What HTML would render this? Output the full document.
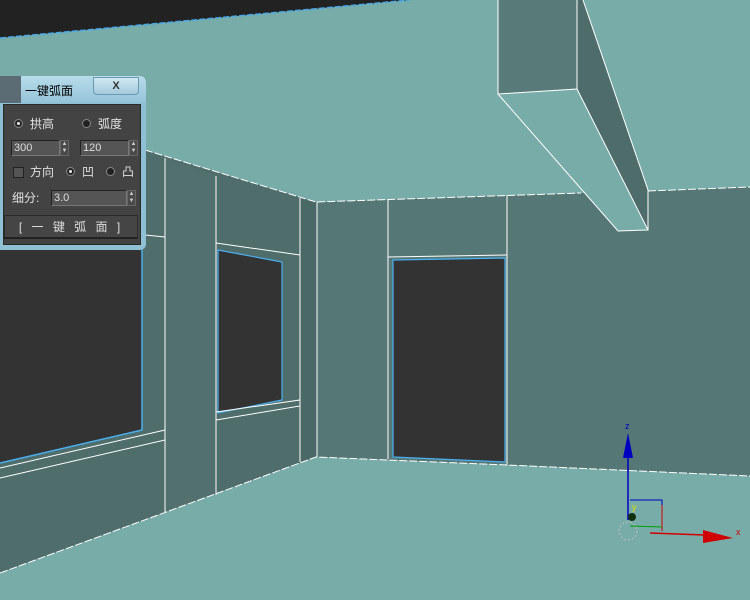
<!DOCTYPE html>
<html><head><meta charset="utf-8"><style>
body{margin:0;width:750px;height:600px;overflow:hidden;background:#78aca9;font-family:"Liberation Sans","Noto Sans CJK SC",sans-serif;position:relative}
svg{position:absolute;left:0;top:0}
.dlg{position:absolute;left:0;top:76px;width:146px;height:174px}
.t{position:absolute;color:#e0e0e0;font-size:12px;line-height:14px}
.inp{position:absolute;background:#555;border:1px solid #222;border-right-color:#777;border-bottom-color:#777;color:#ddd;font-size:11px;line-height:14px;padding-left:2px;box-sizing:border-box;height:16px}
.sp{position:absolute;width:9px;height:16px;background:#4a4a4a;border:1px solid #666;box-sizing:border-box;color:#ccc;font-size:6px;line-height:7px;text-align:center}
.rad{position:absolute;width:9px;height:9px;border-radius:50%;background:#222;border:1px solid #888;box-sizing:border-box}
.rad.on::after{content:"";position:absolute;left:2px;top:2px;width:3px;height:3px;border-radius:50%;background:#eee}
</style></head><body>
<svg width="750" height="600" viewBox="0 0 750 600">
<rect width="750" height="600" fill="#78aca9"/>
<polygon points="0,0 410,0 0,38" fill="#222"/>
<line x1="0" y1="38" x2="410" y2="0" stroke="#4aa8e8" stroke-width="1.5" stroke-dasharray="6,2"/>
<polygon points="145,150 316,202 316,457 0,573 0,250 145,235" fill="#4f6d6b"/>
<polygon points="316,202 581,193 648,191 750,187 750,476 507,465 316,457" fill="#557775"/>
<polygon points="165,158 216,176 216,495 165,512" fill="#52706e"/>
<polygon points="300,198 317,202 317,457 300,462" fill="#4a6866"/>
<polygon points="0,573 316,457 507,465 750,476 750,600 0,600" fill="#78aca9"/>
<polygon points="0,250 142,250 142,430 0,463" fill="#333"/>
<polyline points="0,463 142,430 142,250" fill="none" stroke="#4ab0f0" stroke-width="1.5"/>
<polygon points="218,250 282,262 282,400 218,413" fill="#333"/>
<polygon points="218,250 282,262 282,400 218,413" fill="none" stroke="#4ab0f0" stroke-width="1.2"/>
<polygon points="393,260 505,258 505,462 393,457" fill="#333"/>
<polygon points="393,260 505,258 505,462 393,457" fill="none" stroke="#4ab0f0" stroke-width="1.2"/>
<g stroke="#fff" stroke-width="1" fill="none">
<polyline points="0,468 165,430 165,440 0,478"/>
<polyline points="216,412 300,400 300,406 216,420"/>
<polyline points="216,243 300,255"/>
<polyline points="388,257 507,255"/>
<line x1="165" y1="158" x2="165" y2="512"/>
<line x1="216" y1="176" x2="216" y2="495"/>
<line x1="300" y1="198" x2="300" y2="462"/>
<line x1="317" y1="202" x2="317" y2="457"/>
<line x1="388" y1="200" x2="388" y2="459"/>
<line x1="507" y1="195" x2="507" y2="465"/>
<line x1="145" y1="235" x2="165" y2="237"/>
</g>
<g stroke="#fff" stroke-width="1" fill="none" stroke-dasharray="8,2">
<polyline points="145,150 316,202 581,193"/>
<polyline points="648,191 750,187"/>
<polyline points="0,573 316,457 507,465 750,476"/>
</g>
<polygon points="498,0 577,0 577,89 498,94" fill="#587a78"/>
<polygon points="577,0 583,0 648,190 648,230 577,89" fill="#4e6c6a"/>
<polygon points="498,94 577,89 648,230 618,231" fill="#78aca9"/>
<g stroke="#fff" fill="none" stroke-width="1">
<polyline points="498,0 498,94 577,89 577,0"/>
<polyline points="498,94 618,231 648,230 577,89"/>
<polyline points="583,0 648,190 648,230"/>
</g>
<line x1="628" y1="455" x2="628" y2="520" stroke="#0000c0" stroke-width="1.5"/>
<polygon points="628,433 623,458 633,458" fill="#0000c0"/>
<text x="625" y="429" font-size="9" fill="#0000c0" font-family="Liberation Sans">z</text>
<polyline points="630,500 662,500 662,530" fill="none" stroke="#0000c0"/>
<polyline points="662,505 662,531" stroke="#d00000" fill="none"/>
<polyline points="630,526 662,527" stroke="#00a000" fill="none"/>
<line x1="650" y1="533" x2="705" y2="535" stroke="#d00000" stroke-width="1.5"/>
<polygon points="703,530 733,538 703,543" fill="#d00000"/>
<text x="736" y="535" font-size="9" fill="#d00000" font-family="Liberation Sans">x</text>
<text x="632" y="510" font-size="9" fill="#e0e000" font-family="Liberation Sans">y</text>
<circle cx="632" cy="517" r="4" fill="#103010"/>
<circle cx="628" cy="531" r="9" fill="none" stroke="#bbb" stroke-dasharray="2,2"/>
</svg>
<div class="dlg">
 <div style="position:absolute;left:0;top:0;width:146px;height:27px;background:linear-gradient(#b8dcea,#94c4d8);border-radius:0 6px 0 0"></div>
 <div style="position:absolute;left:0;top:0;width:21px;height:27px;background:#5c6c74"></div>
 <div style="position:absolute;left:25px;top:6px;font-size:12px;color:#000">一键弧面</div>
 <div style="position:absolute;left:93px;top:1px;width:46px;height:18px;border:1px solid #6a9ab0;border-radius:0 0 4px 4px;background:linear-gradient(#cfe8f2,#a4cadc);box-sizing:border-box;text-align:center;font-weight:bold;font-size:11px;line-height:16px;color:#333">X</div>
 <div style="position:absolute;left:0;top:27px;width:146px;height:147px;background:#8fbfd2;border-radius:0 0 6px 0"></div>
 <div style="position:absolute;left:3px;top:28px;width:138px;height:141px;background:#434343;border:1px solid #2a2a2a;box-sizing:border-box"></div>
 <div class="rad on" style="left:14px;top:43px"></div><div class="t" style="left:30px;top:41px">拱高</div>
 <div class="rad" style="left:82px;top:43px"></div><div class="t" style="left:98px;top:41px">弧度</div>
 <div class="inp" style="left:11px;top:64px;width:49px">300</div><div class="sp" style="left:60px;top:64px">▲<br>▼</div>
 <div class="inp" style="left:80px;top:64px;width:49px">120</div><div class="sp" style="left:129px;top:64px">▲<br>▼</div>
 <div style="position:absolute;left:13px;top:91px;width:11px;height:11px;background:#555;border:1px solid #222;box-sizing:border-box"></div><div class="t" style="left:30px;top:89px">方向</div>
 <div class="rad on" style="left:66px;top:91px"></div><div class="t" style="left:82px;top:89px">凹</div>
 <div class="rad" style="left:106px;top:91px"></div><div class="t" style="left:122px;top:89px">凸</div>
 <div class="t" style="left:12px;top:115px">细分:</div>
 <div class="inp" style="left:51px;top:114px;width:76px">3.0</div><div class="sp" style="left:127px;top:114px">▲<br>▼</div>
 <div style="position:absolute;left:4px;top:139px;width:134px;height:24px;background:#454545;border:1px solid #2a2a2a;border-bottom:2px solid #222;box-sizing:border-box;text-align:center;color:#ddd;font-size:12px;line-height:22px;letter-spacing:3px">[ 一 键 弧 面 ]</div>
</div>
</body></html>
